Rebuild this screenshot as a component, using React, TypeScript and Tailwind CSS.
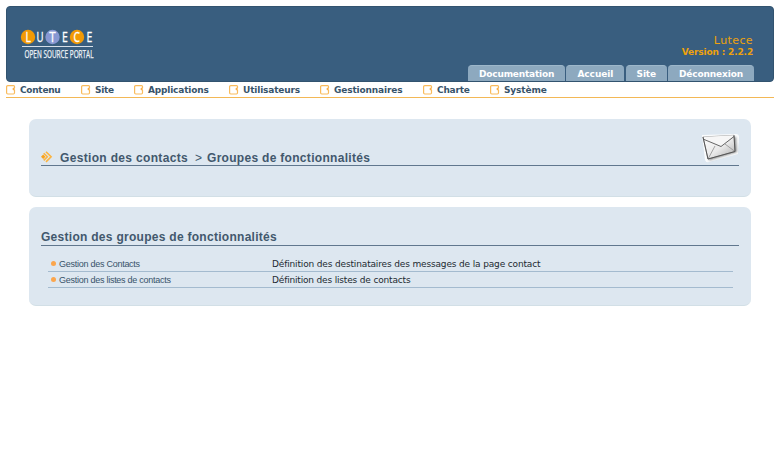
const tabs = [
  { label: 'Documentation', box: 'w-[97px]', text: 'tracking-[-0.19px]' },
  { label: 'Accueil', box: 'w-[58px]', text: 'tracking-[-0.05px]' },
  { label: 'Site', box: 'w-[41px]', text: 'tracking-[-0.2px]' },
  { label: 'Déconnexion', box: 'w-[86px]', text: 'tracking-[-0.12px]' },
];

const menu = [
  { label: 'Contenu', box: 'w-[75px]', text: 'tracking-[-0.28px]' },
  { label: 'Site', box: 'w-[53px]', text: 'tracking-[-0.28px]' },
  { label: 'Applications', box: 'w-[95px]', text: 'tracking-[-0.18px]' },
  { label: 'Utilisateurs', box: 'w-[91px]', text: 'tracking-[-0.16px]' },
  { label: 'Gestionnaires', box: 'w-[103px]', text: 'tracking-[-0.14px]' },
  { label: 'Charte', box: 'w-[67px]', text: 'tracking-[-0.2px]' },
  { label: 'Système', box: 'w-[80px]', text: 'tracking-[-0.14px]' },
];

const features = [
  { name: 'Gestion des Contacts', text: 'Définition des destinataires des messages de la page contact', track: 'tracking-[-0.15px]' },
  { name: 'Gestion des listes de contacts', text: 'Définition des listes de contacts', track: 'tracking-[-0.17px]' },
];

function Logo() {
  return (
    <svg width="80" height="42" viewBox="0 -5 80 42" className="block">
      <circle cx="8" cy="9" r="7.2" fill="#f29a05" />
      <circle cx="32.5" cy="9" r="7.2" fill="#8798d3" />
      <circle cx="57" cy="9" r="7.2" fill="#f29a05" />
      <g fill="#fff" stroke="#fff" strokeWidth=".35" fontFamily="'Open Sans', sans-serif" fontSize="14.5" fontWeight="400">
        <text x="5.4" y="14.2" textLength="5.4" lengthAdjust="spacingAndGlyphs">L</text>
        <text x="16.6" y="14.2" textLength="7" lengthAdjust="spacingAndGlyphs">U</text>
        <text x="29.3" y="14.2" textLength="6.4" lengthAdjust="spacingAndGlyphs">T</text>
        <text x="42" y="14.2" textLength="5.8" lengthAdjust="spacingAndGlyphs">E</text>
        <text x="53.6" y="14.2" textLength="6.4" lengthAdjust="spacingAndGlyphs">C</text>
        <text x="66.6" y="14.2" textLength="5.8" lengthAdjust="spacingAndGlyphs">E</text>
      </g>
      <path d="M2 18.5H73" stroke="#d6dfe8" strokeWidth="1" />
      <text x="4.5" y="30" fill="#f0f4f8" stroke="#f0f4f8" strokeWidth=".25" fontFamily="'Open Sans', sans-serif" fontSize="10.5" fontWeight="400" textLength="69" lengthAdjust="spacingAndGlyphs">OPEN SOURCE PORTAL</text>
    </svg>
  );
}

function MenuIcon() {
  return (
    <svg width="11" height="10" viewBox="0 0 11 10" className="block shrink-0">
      <path d="M8.5 3V1.6Q8.5 .6 7.6 .6H1.8Q.6 .6 .6 1.8V7.8Q.6 9 1.8 9H7.4Q8.5 9 8.5 7.8V5" fill="none" stroke="#f9bb5c" strokeWidth="1.2" />
      <path d="M6.4 4H9M7.7 2.8V5.2" fill="none" stroke="#f9ab40" strokeWidth="1.2" />
    </svg>
  );
}

function Arrows() {
  return (
    <svg width="12" height="12" viewBox="0 0 12 12" className="block">
      <path d="M2.2 3.6L4.4 5.8L2.2 8L0 5.8Z" fill="#f9a21c" />
      <path d="M2.7 2.2L6.3 5.8L2.7 9.4M5 .7L10.1 5.8L5 10.9" fill="none" stroke="#fbb440" strokeWidth="1.6" />
    </svg>
  );
}

function Envelope() {
  return (
    <svg width="40" height="32" viewBox="0 0 40 32" className="block">
      <defs>
        <linearGradient id="paper" x1="0" y1="0" x2="1" y2="1">
          <stop offset="0" stopColor="#fff" />
          <stop offset=".55" stopColor="#e8e8e8" />
          <stop offset="1" stopColor="#aaa" />
        </linearGradient>
        <filter id="soft" x="-20%" y="-20%" width="140%" height="140%">
          <feGaussianBlur stdDeviation="0.8" />
        </filter>
      </defs>
      <path d="M1 1L35 0Q38 0 38 3L37 20L8 28Q5 29 4 26Z" fill="#fff" opacity=".85" />
      <path d="M5 4L35 3L36 18L8 26.5Z" fill="#555" opacity=".65" filter="url(#soft)" />
      <path d="M2 3L33 1.3L34 17.5L7 25Z" fill="url(#paper)" stroke="#888" strokeWidth=".7" />
      <path d="M7 25L14 12M34 17.5L24 10" stroke="#999" strokeWidth=".9" />
      <path d="M2 3L20 12.5L33 1.3Z" fill="#f6f6f6" />
      <path d="M2 5L20 12.5L33 2.5" fill="none" stroke="#666" strokeWidth="1" />
      <path d="M2 3L7 25M33 1.3L34 17.5L7 25" fill="none" stroke="#555" strokeWidth="1" />
    </svg>
  );
}

export default function App() {
  return (
    <div className="h-[468px] w-[780px] overflow-hidden bg-white px-[6px] pt-[6px] font-['DejaVu_Sans',sans-serif] text-[#38536a]">
      <header className="flex h-[76px] justify-between rounded-[4px] border border-[#32536f] bg-[#395e7f]">
        <div className="pt-[16px] pl-[13px]">
          <Logo />
        </div>
        <div className="flex flex-col items-end pr-[19px]">
          <div className="mt-[27px] h-[13px] pr-px text-[11px] leading-[14px] tracking-[0.4px] text-[#eea20c]">Lutece</div>
          <div className="h-[11px] pr-px text-[9px] leading-[11px] font-bold tracking-[-0.15px] text-[#eea20c]">Version : 2.2.2</div>
          <nav className="mt-[7px] flex gap-[1.3px]">
            {tabs.map((t) => (
              <a key={t.label} className={`${t.box} h-[16px] rounded-t-[4px] border-t border-[#9db7ca] bg-[#8da9bf] text-center text-[9px] leading-[16px] font-bold whitespace-nowrap text-white`}>
                <span className={t.text}>{t.label}</span>
              </a>
            ))}
          </nav>
        </div>
      </header>

      <nav className="flex h-[16px] items-center border-b border-[#f3b856]">
        {menu.map((m) => (
          <a key={m.label} className={`${m.box} flex items-center gap-[3px] text-[9px] leading-[15px] font-bold whitespace-nowrap`}>
            <MenuIcon />
            <span className={`${m.text} pt-px`}>{m.label}</span>
          </a>
        ))}
      </nav>

      <main className="px-[23px] pt-[21px] font-['Liberation_Sans',Arial,sans-serif]">
        <section className="h-[78px] rounded-[7px] border-b border-[#d2dfe6] bg-[#dde7f0] px-[12px] pt-[15px]">
          <div className="flex h-[32px] justify-between border-b border-[#60778e]">
            <h1 className="flex items-end text-[12px] leading-[14px] font-bold text-[#42586d]">
              <span className="mb-[2px] w-[19px]"><Arrows /></span>
              <span className="w-[135px] tracking-[0.33px] whitespace-nowrap">Gestion des contacts</span>
              <span className="w-[12px] font-normal">&gt;</span>
              <span className="tracking-[0.3px] whitespace-nowrap">Groupes de fonctionnalités</span>
            </h1>
            <div className="h-[31px] w-[38px]"><Envelope /></div>
          </div>
        </section>

        <section className="mt-[10px] h-[99px] rounded-[7px] border-b border-[#d2dfe6] bg-[#dde7f0] px-[12px] pt-[22px]">
          <h2 className="h-[17px] border-b border-[#60778e] text-[12px] leading-[16px] font-bold tracking-[0.28px] text-[#42586d]">Gestion des groupes de fonctionnalités</h2>
          <ul className="mr-[6px] ml-[7px] pt-[10px]">
            {features.map((f) => (
              <li key={f.name} className="flex h-[16px] items-center border-b border-[#a4bbcf] pl-[3px]">
                <span className="mr-[3px] size-[5px] rounded-full bg-[#fba64d]" />
                <a className="w-[213px] text-[9px] leading-[14px] tracking-[-0.26px] whitespace-nowrap">{f.name}</a>
                <span className={`${f.track} pt-[2px] font-['DejaVu_Sans',sans-serif] text-[9px] leading-[13px] whitespace-nowrap text-[#222a31]`}>{f.text}</span>
              </li>
            ))}
          </ul>
        </section>
      </main>
    </div>
  );
}
